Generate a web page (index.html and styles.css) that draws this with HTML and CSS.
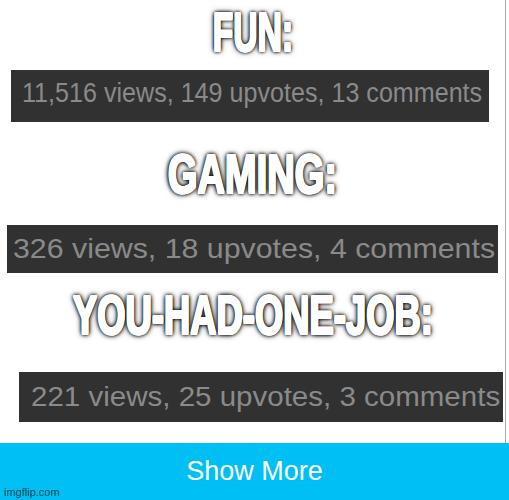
FILE: index.html
```html
<!DOCTYPE html>
<html lang="en">

<head>
    <meta charset="UTF-8">
    <meta name="viewport" content="width=device-width, initial-scale=1.0">
    <title>Stream Stats</title>
    <link rel="stylesheet" href="styles.css">
</head>

<body>
    <div class="page">
        <div class="board">
            <div class="title title-first"><span>FUN:</span></div>
            <div class="stats stats-fun"><span>11,516 views, 149 upvotes, 13 comments</span></div>

            <div class="title title-gaming"><span>GAMING:</span></div>
            <div class="stats stats-gaming"><span>326 views, 18 upvotes, 4 comments</span></div>

            <div class="title title-job"><span>YOU-HAD-ONE-JOB:</span></div>
            <div class="stats stats-job"><span>221 views, 25 upvotes, 3 comments</span></div>
        </div>

        <button class="show-more">Show More</button>
        <div class="watermark">imgflip.com</div>
    </div>
</body>

</html>
```

FILE: styles.css
```css
body {
    margin: 0;
    background-color: #fff;
    font-family: "Liberation Sans", Arial, sans-serif;
}

.page {
    position: relative;
    width: 509px;
    height: 500px;
    overflow: hidden;
}

.board {
    width: 506px;
    height: 443px;
    box-sizing: border-box;
    border-right: 1px solid #a8a8a8;
    display: flex;
    flex-direction: column;
}

/* meme style captions */
.title {
    display: flex;
    justify-content: center;
    height: 40px;
    line-height: 40px;
    white-space: nowrap;
    font-size: 56px;
    font-weight: bold;
    color: #fff;
}

.title span {
    display: inline-block;
    /* white copies fatten the strokes, black blur gives the glow */
    text-shadow:
        1px 0 #fff, -1px 0 #fff, 0 1px #fff, 0 -1px #fff,
        1px 1px #fff, -1px -1px #fff, 1px -1px #fff, -1px 1px #fff,
        0 0 4px #000, 0 0 5px #000, 0 0 6px #000, 0 0 9px rgba(0, 0, 0, 0.7);
}

.title-first {
    margin-top: 12px;
}

.title-first span {
    transform: scaleX(0.6);
}

.title-gaming {
    margin-top: 32px;
}

.title-gaming span {
    transform: scaleX(0.68);
}

.title-job {
    margin-top: 22px;
}

.title-job span {
    transform: scaleX(0.65);
}

.stats {
    display: flex;
    align-items: center;
    box-sizing: border-box;
    background-color: #313131;
    color: #8a8a8a;
    white-space: nowrap;
    overflow: hidden;
}

.stats span {
    display: inline-block;
    transform-origin: left center;
}

.stats-fun {
    margin: 18px 0 0 11px;
    width: 478px;
    height: 52px;
    padding: 0 0 6px 11px;
    font-size: 27px;
}

.stats-fun span {
    transform: scaleX(0.93);
}

.stats-gaming {
    margin: 31px 0 0 7px;
    width: 491px;
    height: 48px;
    padding-left: 6px;
    font-size: 28px;
}

.stats-gaming span {
    transform: scaleX(1.083);
}

.stats-job {
    margin: 37px 0 0 19px;
    width: 484px;
    height: 50px;
    padding-left: 12px;
    font-size: 27px;
}

.stats-job span {
    transform: scaleX(1.093);
}

.show-more {
    display: block;
    width: 100%;
    height: 57px;
    border: none;
    padding: 0;
    background-color: #00bff2;
    color: #fff;
    font-family: "Liberation Sans", Arial, sans-serif;
    font-size: 27px;
}

.watermark {
    position: absolute;
    left: 4px;
    bottom: 2px;
    font-size: 11px;
    color: rgba(20, 30, 40, 0.8);
}
```
